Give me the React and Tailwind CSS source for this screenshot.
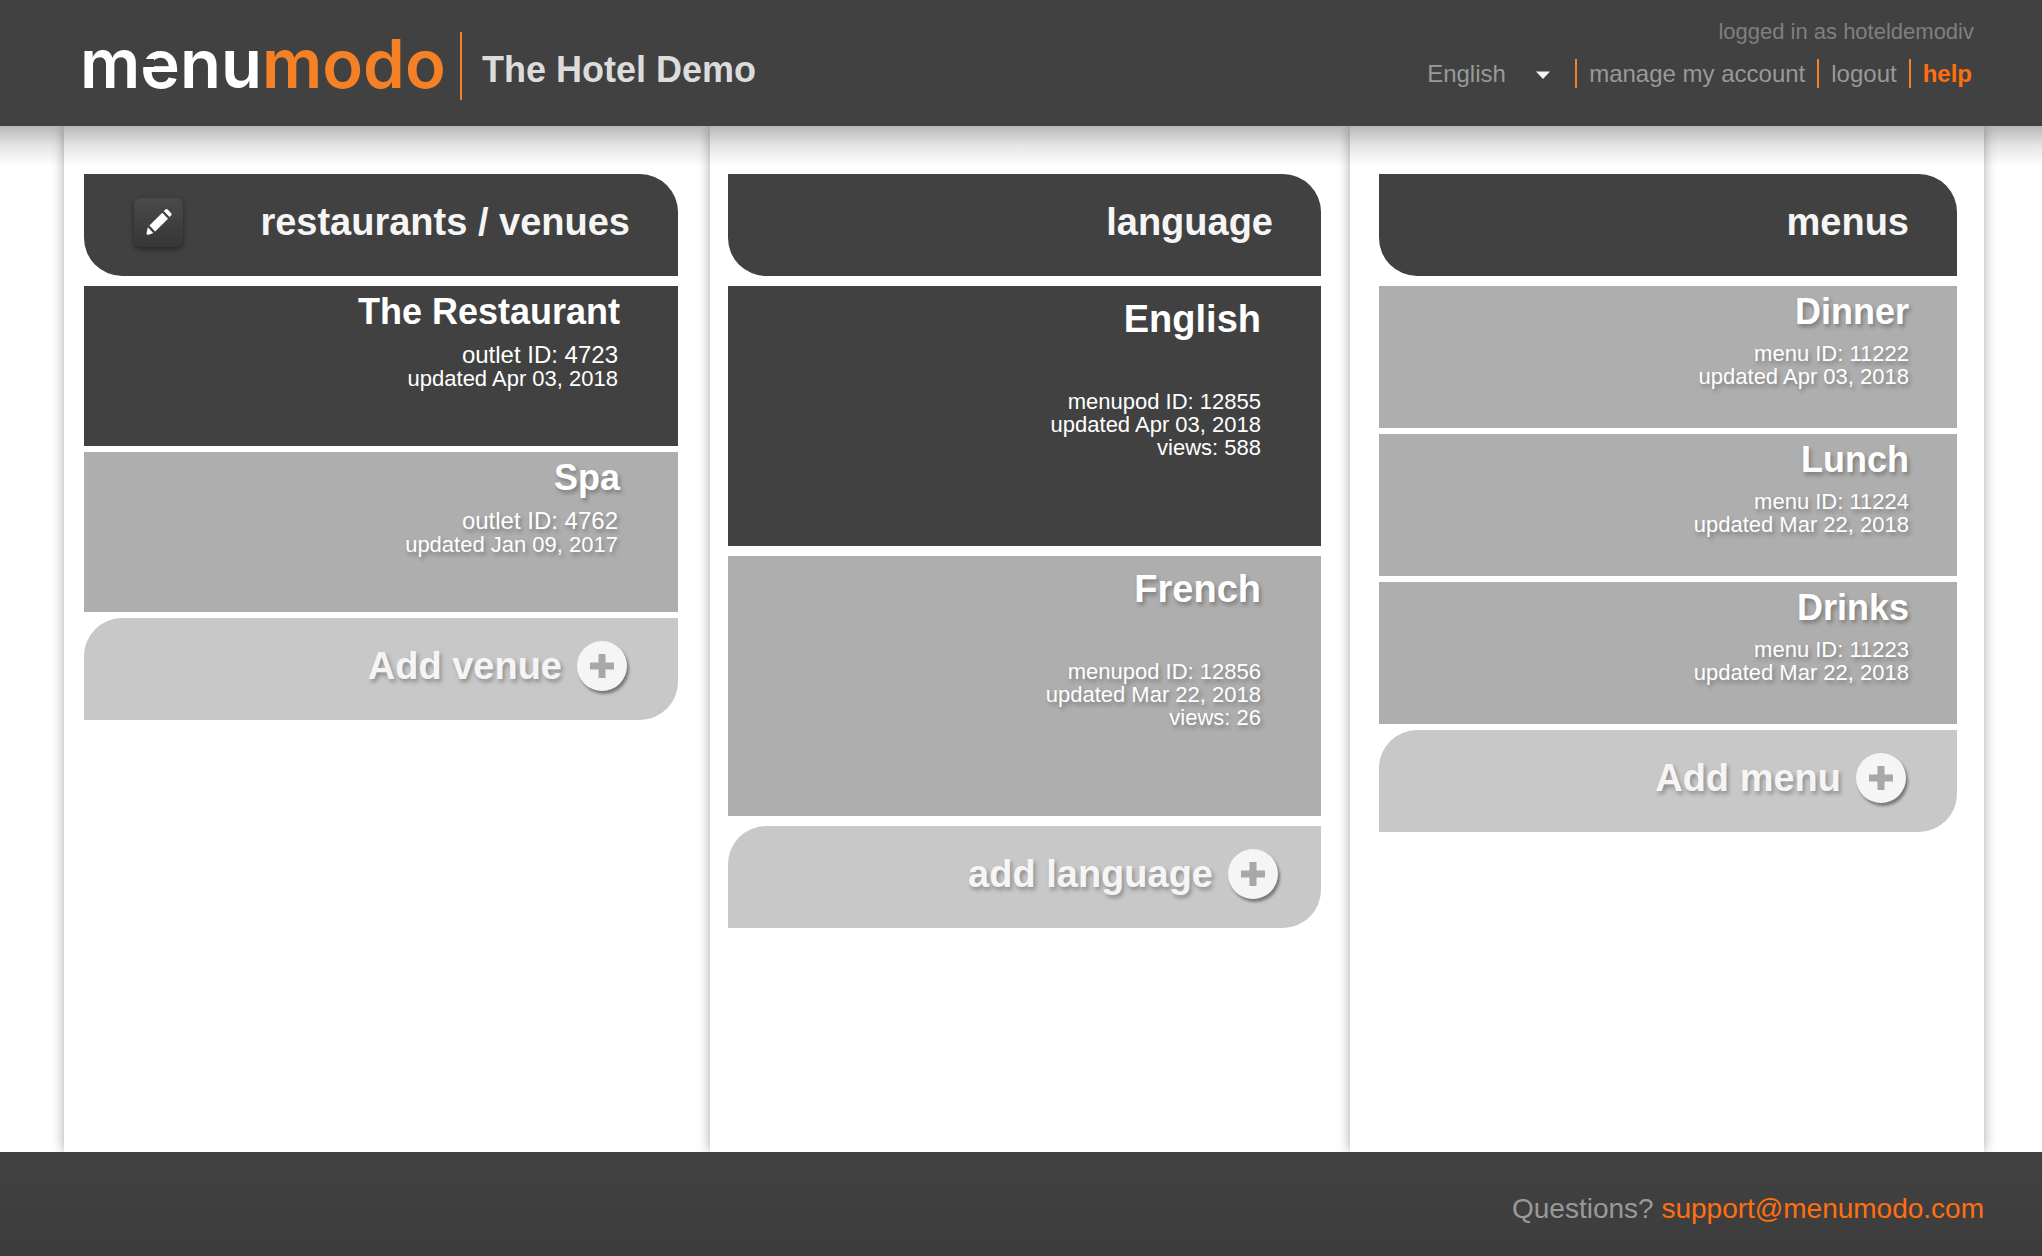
import React from "react";

const venues = [
  { name: "The Restaurant", id: "outlet ID: 4723", updated: "updated Apr 03, 2018", active: true },
  { name: "Spa", id: "outlet ID: 4762", updated: "updated Jan 09, 2017" },
];

const languages = [
  { name: "English", id: "menupod ID: 12855", updated: "updated Apr 03, 2018", views: "views: 588", active: true },
  { name: "French", id: "menupod ID: 12856", updated: "updated Mar 22, 2018", views: "views: 26" },
];

const menus = [
  { name: "Dinner", id: "menu ID: 11222", updated: "updated Apr 03, 2018" },
  { name: "Lunch", id: "menu ID: 11224", updated: "updated Mar 22, 2018" },
  { name: "Drinks", id: "menu ID: 11223", updated: "updated Mar 22, 2018" },
];

function Logo() {
  return (
    <a
      href="#home"
      className="font-['Inter'] text-[67px] leading-[64px] font-semibold whitespace-nowrap text-white"
    >
      m
      <span className="relative">
        e
        <span className="absolute top-[36px] left-0 h-[8px] w-[14px] bg-[#414141]" />
      </span>
      nu<span className="text-[#f58025]">modo</span>
    </a>
  );
}

function Separator() {
  return <span className="h-[29px] w-[2px] bg-[#f08228]" />;
}

function PencilIcon() {
  return (
    <svg width="30" height="30" viewBox="0 0 30 30" fill="#fff" aria-hidden="true">
      <path d="M21.300 2.600c.8-.8 1.600-.8 2.400 0l3.300 3.500c.8.8.8 1.700 0 2.500l-1.500 1.500-5.700-6z" />
      <path d="M18.300 5.700l5.700 6L11.200 24.600l-5.800-6z" />
      <path d="M3.800 20.300l5.500 5.600-4.600 1.900c-1.300.5-2.300-.4-2.100-1.700z" />
    </svg>
  );
}

function PlusIcon() {
  return (
    <span className="flex size-[50px] items-center justify-center rounded-full bg-[#f5f5f5] shadow-[2px_3px_3px_rgba(0,0,0,0.4)]">
      <svg width="24" height="24" viewBox="0 0 24 24" fill="#a8a8a8" aria-hidden="true">
        <path d="M8.500 0h7v8.500H24v7h-8.500V24h-7v-8.500H0v-7h8.500z" />
      </svg>
    </span>
  );
}

function Heading({ children, icon }) {
  return (
    <div className="flex min-h-[102px] items-center justify-between rounded-tr-[38px] rounded-bl-[38px] bg-[#414141] pr-12 pb-[6px] pl-[50px]">
      <span>{icon}</span>
      <h2 className="text-[38px] leading-[40px] font-bold text-[#f5f5f5]">{children}</h2>
    </div>
  );
}

function AddButton({ children, className }) {
  return (
    <button
      type="button"
      className={
        "flex min-h-[102px] w-full items-center justify-end gap-[15px] rounded-tl-[38px] rounded-br-[38px] bg-[#c8c8c8] pb-[6px] text-[38px] leading-[40px] font-bold text-[#f5f5f5] [text-shadow:2px_3px_4px_rgba(0,0,0,0.3)] " +
        className
      }
    >
      {children}
      <PlusIcon />
    </button>
  );
}

function tone(active) {
  return active
    ? "bg-[#414141]"
    : "bg-[#aeaeae] [text-shadow:2px_3px_4px_rgba(0,0,0,0.3)]";
}

export default function App() {
  return (
    <div className="flex min-h-screen flex-col bg-white font-['Liberation_Sans',Arial,sans-serif]">
      <header className="relative z-10 flex min-h-[126px] justify-between bg-[#414141] pr-[68px] pl-20">
        <div className="flex items-start pt-8">
          <div className="w-[380px]">
            <Logo />
          </div>
          <span className="h-[68px] w-[2px] bg-[#f58025]" />
          <h1 className="ml-5 pt-[18px] text-[36px] leading-[40px] font-bold text-[#dcdcdc]">The Hotel Demo</h1>
        </div>
        <div className="flex flex-col items-end pt-5">
          <p className="text-[22px] leading-[24px] text-[#7f7f7f]">logged in as hoteldemodiv</p>
          <nav className="mt-[15px] flex items-center gap-3 text-[24px] leading-[28px] text-[#999]">
            <label className="relative mr-[6px] flex items-center">
              <select
                aria-label="Interface language"
                className="w-[130px] appearance-none bg-transparent text-[#999] outline-none"
              >
                <option>English</option>
              </select>
              <svg
                className="pointer-events-none absolute top-[11px] right-[5px]"
                width="18"
                height="9"
                viewBox="0 0 18 9"
                aria-hidden="true"
              >
                <path d="M2 0.500h14L9 8z" fill="#f5f5f5" />
              </svg>
            </label>
            <Separator />
            <a href="#account">manage my account</a>
            <Separator />
            <a href="#logout">logout</a>
            <Separator />
            <a href="#help" className="pr-[2px] font-bold text-[#ff6f0f]">
              help
            </a>
          </nav>
        </div>
        <div className="pointer-events-none absolute inset-x-0 top-full h-10 bg-linear-to-b from-black/28 via-black/10 to-transparent" />
      </header>

      <main className="mr-[58px] ml-16 grid flex-1 grid-cols-[646fr_640fr_634fr]">
        <section className="bg-white pt-12 pr-8 pb-12 pl-5 shadow-[0_0_12px_rgba(0,0,0,0.35)]">
          <Heading
            icon={
              <button
                type="button"
                aria-label="Edit venues"
                className="flex size-[49px] items-center justify-center rounded-[7px] bg-linear-to-b from-[#4a4a4a] to-[#363636] shadow-[0_2px_5px_rgba(0,0,0,0.45)]"
              >
                <PencilIcon />
              </button>
            }
          >
            restaurants / venues
          </Heading>
          <div className="mt-[10px] mb-[6px] flex flex-col gap-[6px]">
            {venues.map((v) => (
              <article key={v.name} className={"min-h-40 pt-[6px] pr-[58px] text-right text-white " + tone(v.active)}>
                <h3 className="text-[36px] leading-[40px] font-bold">{v.name}</h3>
                <div className="mt-[11px] pr-[2px] leading-[24px]">
                  <p className="text-[24px] leading-[24px]">{v.id}</p>
                  <p className="text-[22px] leading-[24px]">{v.updated}</p>
                </div>
              </article>
            ))}
          </div>
          <AddButton className="pr-[51px]">Add venue</AddButton>
        </section>

        <section className="bg-white pt-12 pr-[29px] pb-12 pl-[18px] shadow-[0_0_12px_rgba(0,0,0,0.35)]">
          <Heading>language</Heading>
          <div className="my-[10px] flex flex-col gap-[10px]">
            {languages.map((l) => (
              <article key={l.name} className={"min-h-[260px] pt-[13px] pr-[60px] text-right text-white " + tone(l.active)}>
                <h3 className="text-[38px] leading-[40px] font-bold">{l.name}</h3>
                <div className="mt-[51px] text-[22px] leading-[23px]">
                  <p>{l.id}</p>
                  <p>{l.updated}</p>
                  <p>{l.views}</p>
                </div>
              </article>
            ))}
          </div>
          <AddButton className="pr-[43px]">add language</AddButton>
        </section>

        <section className="bg-white pt-12 pr-[27px] pb-12 pl-[29px] shadow-[0_0_12px_rgba(0,0,0,0.35)]">
          <Heading>menus</Heading>
          <div className="mt-[10px] mb-[6px] flex flex-col gap-[6px]">
            {menus.map((m) => (
              <article key={m.name} className={"min-h-[142px] pt-[6px] pr-12 text-right text-white " + tone(m.active)}>
                <h3 className="text-[36px] leading-[40px] font-bold">{m.name}</h3>
                <div className="mt-[10px] text-[22px] leading-[23px]">
                  <p>{m.id}</p>
                  <p>{m.updated}</p>
                </div>
              </article>
            ))}
          </div>
          <AddButton className="pr-[51px]">Add menu</AddButton>
        </section>
      </main>

      <footer className="relative z-10 flex min-h-[104px] items-center justify-end bg-linear-to-b from-[#424242] to-[#3c3c3c] pt-[9px] pr-[58px] text-[28px] leading-[32px] text-[#999]">
        <p>
          Questions?{" "}
          <a href="mailto:support@menumodo.com" className="text-[#ff6f0f]">
            support@menumodo.com
          </a>
        </p>
      </footer>
    </div>
  );
}
